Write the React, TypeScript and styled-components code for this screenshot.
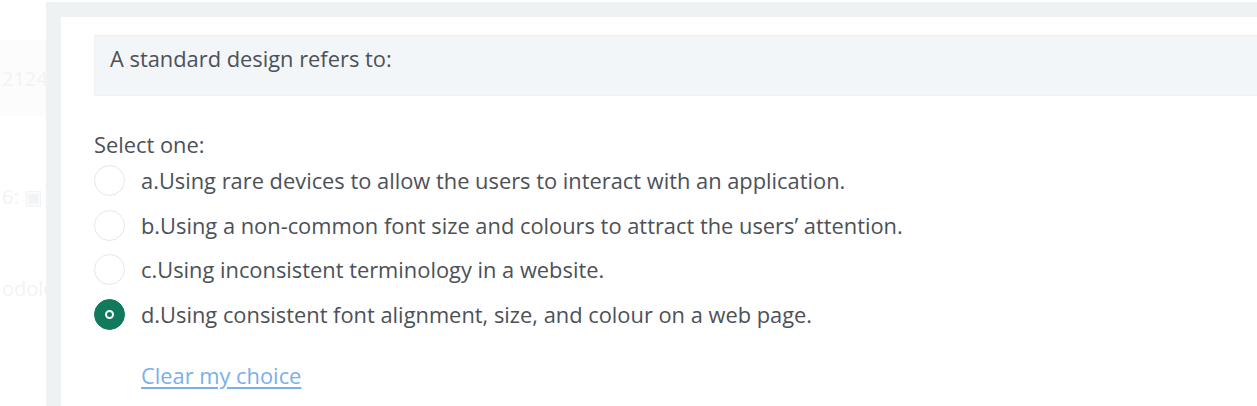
import React from 'react';
import styled, { createGlobalStyle } from 'styled-components';

const GlobalStyle = createGlobalStyle`
  html, body {
    margin: 0;
    padding: 0;
    background: #ffffff;
  }
  body {
    font-family: "Open Sans", "Noto Sans", sans-serif;
  }
`;

const Page = styled.div`
  display: flex;
  height: 406px;
  overflow: hidden;
`;

const Sidebar = styled.div`
  width: 46px;
  flex-shrink: 0;
  display: flex;
  flex-direction: column;
  overflow: hidden;
  background: #ffffff;
`;

const SideBlock = styled.div<{ $h: number; $shade?: boolean }>`
  height: ${(p) => p.$h}px;
  display: flex;
  align-items: center;
  padding-left: 2px;
  background: ${(p) => (p.$shade ? '#fcfcfc' : 'transparent')};
  color: #f2f3f4;
  font-size: 20px;
  white-space: nowrap;
`;

const Main = styled.div`
  flex: 1;
  margin-top: 2px;
  padding: 15px 0 0 15px;
  background: #eef2f3;
  display: flex;
  min-width: 0;
`;

const Panel = styled.div`
  flex: 1;
  background: #ffffff;
  padding: 18px 0 0 33px;
  display: flex;
  flex-direction: column;
  min-width: 0;
`;

const QuestionBox = styled.div`
  height: 61px;
  box-sizing: border-box;
  background: #f3f6f9;
  border: 1px solid #eef2f6;
  border-right: none;
  padding: 8px 0 0 15px;
  color: #4c5157;
  font-size: 21.85px;
  line-height: 29px;
  white-space: nowrap;
`;

const Prompt = styled.div`
  margin-top: 35px;
  color: #4c5157;
  font-size: 21.85px;
  line-height: 27px;
`;

const Options = styled.div`
  display: flex;
  flex-direction: column;
`;

const OptionRow = styled.label`
  display: flex;
  align-items: center;
  gap: 16px;
  height: 44.7px;
  color: #4c5157;
  font-size: 21.85px;
  white-space: nowrap;
`;

const Radio = styled.span<{ $checked?: boolean }>`
  width: 31px;
  height: 31px;
  box-sizing: border-box;
  border-radius: 50%;
  border: 1px solid ${(p) => (p.$checked ? '#117a5c' : '#e4e7ea')};
  background: ${(p) => (p.$checked ? '#117a5c' : '#ffffff')};
  display: flex;
  align-items: center;
  justify-content: center;
  flex-shrink: 0;
`;

const Dot = styled.span`
  width: 9px;
  height: 9px;
  border-radius: 50%;
  box-sizing: border-box;
  border: 2.5px solid #ffffff;
  background: #117a5c;
`;

const ClearRow = styled.div`
  padding: 24px 0 0 47px;
`;

const ClearLink = styled.a`
  color: #7aafe9;
  font-size: 21.85px;
  line-height: 29px;
  text-decoration: underline;
  text-underline-offset: 3px;
  cursor: pointer;
`;

const options = [
  'a.Using rare devices to allow the users to interact with an application.',
  'b.Using a non-common font size and colours to attract the users’ attention.',
  'c.Using inconsistent terminology in a website.',
  'd.Using consistent font alignment, size, and colour on a web page.',
];

export default function App() {
  const selected = 3;
  return (
    <>
      <GlobalStyle />
      <Page>
        <Sidebar>
          <SideBlock $h={40} />
          <SideBlock $h={76} $shade>2124</SideBlock>
          <SideBlock $h={60} />
          <SideBlock $h={40}>6: ▣ 9</SideBlock>
          <SideBlock $h={52} />
          <SideBlock $h={40}>odolo</SideBlock>
        </Sidebar>
        <Main>
          <Panel>
            <QuestionBox>A standard design refers to:</QuestionBox>
            <Prompt>Select one:</Prompt>
            <Options>
              {options.map((text, i) => (
                <OptionRow key={text}>
                  <Radio $checked={i === selected}>{i === selected && <Dot />}</Radio>
                  {text}
                </OptionRow>
              ))}
            </Options>
            <ClearRow>
              <ClearLink>Clear my choice</ClearLink>
            </ClearRow>
          </Panel>
        </Main>
      </Page>
    </>
  );
}
